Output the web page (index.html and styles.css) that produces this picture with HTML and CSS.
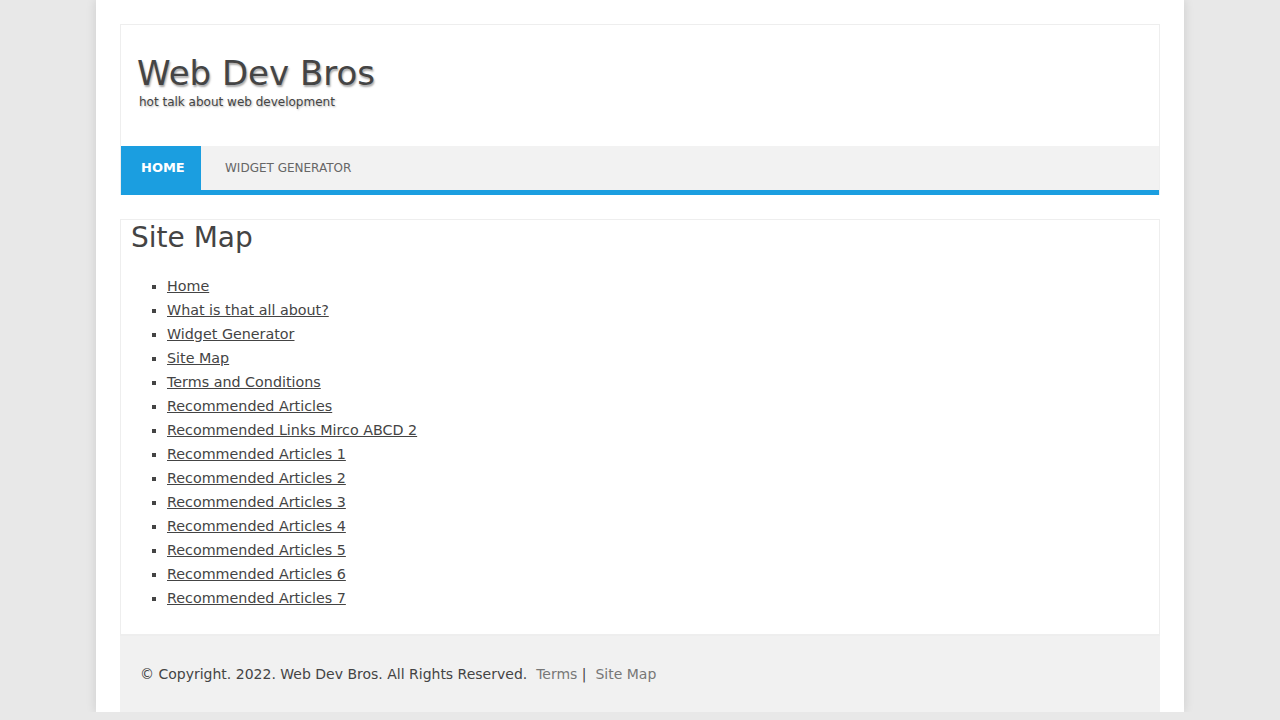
FILE: index.html
```html
<!DOCTYPE html>
<html lang="en">
<head>
<meta charset="utf-8">
<title>Site Map - Web Dev Bros</title>
<link rel="stylesheet" href="styles.css">
</head>
<body>
<div class="wrapper">
  <div class="masthead">
    <header class="header">
      <h1 class="site-title">Web Dev Bros</h1>
      <p class="tagline">hot talk about web development</p>
    </header>
    <nav class="nav">
      <a class="nav-item active" href="#">HOME</a>
      <a class="nav-item" href="#">WIDGET GENERATOR</a>
    </nav>
  </div>
  <main class="content">
    <h2 class="page-title">Site Map</h2>
    <ul class="sitemap">
      <li><a href="#">Home</a></li>
      <li><a href="#">What is that all about?</a></li>
      <li><a href="#">Widget Generator</a></li>
      <li><a href="#">Site Map</a></li>
      <li><a href="#">Terms and Conditions</a></li>
      <li><a href="#">Recommended Articles</a></li>
      <li><a href="#">Recommended Links Mirco ABCD 2</a></li>
      <li><a href="#">Recommended Articles 1</a></li>
      <li><a href="#">Recommended Articles 2</a></li>
      <li><a href="#">Recommended Articles 3</a></li>
      <li><a href="#">Recommended Articles 4</a></li>
      <li><a href="#">Recommended Articles 5</a></li>
      <li><a href="#">Recommended Articles 6</a></li>
      <li><a href="#">Recommended Articles 7</a></li>
    </ul>
  </main>
  <footer class="footer">
    <p class="copyright">© Copyright. 2022. Web Dev Bros. All Rights Reserved.&nbsp; <a href="#">Terms</a> |&nbsp; <a href="#">Site Map</a></p>
  </footer>
</div>
</body>
</html>
```
FILE: styles.css
```css
html, body {
  margin: 0;
  padding: 0;
}
body {
  background: #e8e8e8;
  font-family: "DejaVu Sans", sans-serif;
  color: #444;
}
.wrapper {
  width: 1088px;
  margin: 0 auto;
  background: #fff;
  box-sizing: border-box;
  padding: 24px 24px 0;
  box-shadow: 0 0 10px rgba(0,0,0,0.12);
}
.masthead {
  border: 1px solid #eee;
  border-bottom: none;
}
.header {
  padding: 30px 16px 34px;
}
.site-title {
  margin: 0;
  font-size: 34px;
  line-height: 36px;
  font-weight: normal;
  color: #444;
  text-shadow: 1px 2px 2px rgba(0,0,0,0.35);
}
.tagline {
  margin: 2px 0 0 2px;
  font-size: 12px;
  line-height: 19px;
  color: #444;
  text-shadow: 1px 1px 2px rgba(0,0,0,0.3);
}
.nav {
  display: flex;
  height: 44px;
  background: #f2f2f2;
  border-bottom: 5px solid #1b9ee0;
}
.nav-item {
  display: flex;
  align-items: center;
  padding: 0 22px 0 24px;
  font-size: 12px;
  color: #666;
  text-decoration: none;
}
.nav-item.active {
  width: 80px;
  box-sizing: border-box;
  padding: 0 20px 1px;
  font-size: 13px;
  background: #1b9ee0;
  color: #fff;
  font-weight: bold;
}
.content {
  margin-top: 24px;
  border: 1px solid #eee;
  padding: 0 0 24px;
}
.page-title {
  margin: 0;
  padding-left: 10px;
  font-size: 28px;
  line-height: 36px;
  font-weight: normal;
  color: #444;
}
.sitemap {
  margin: 18px 0 0;
  padding-left: 46px;
  list-style: square;
  font-size: 14.3px;
  line-height: 24px;
}
.sitemap a {
  color: #444;
  text-decoration: underline;
}
.footer {
  background: #f1f1f1;
  border-top: 1px solid #eee;
  padding: 29px 20px 28px;
}
.copyright {
  margin: 0;
  font-size: 14px;
  line-height: 19px;
  color: #444;
}
.copyright a {
  color: #777;
  text-decoration: none;
}
```
